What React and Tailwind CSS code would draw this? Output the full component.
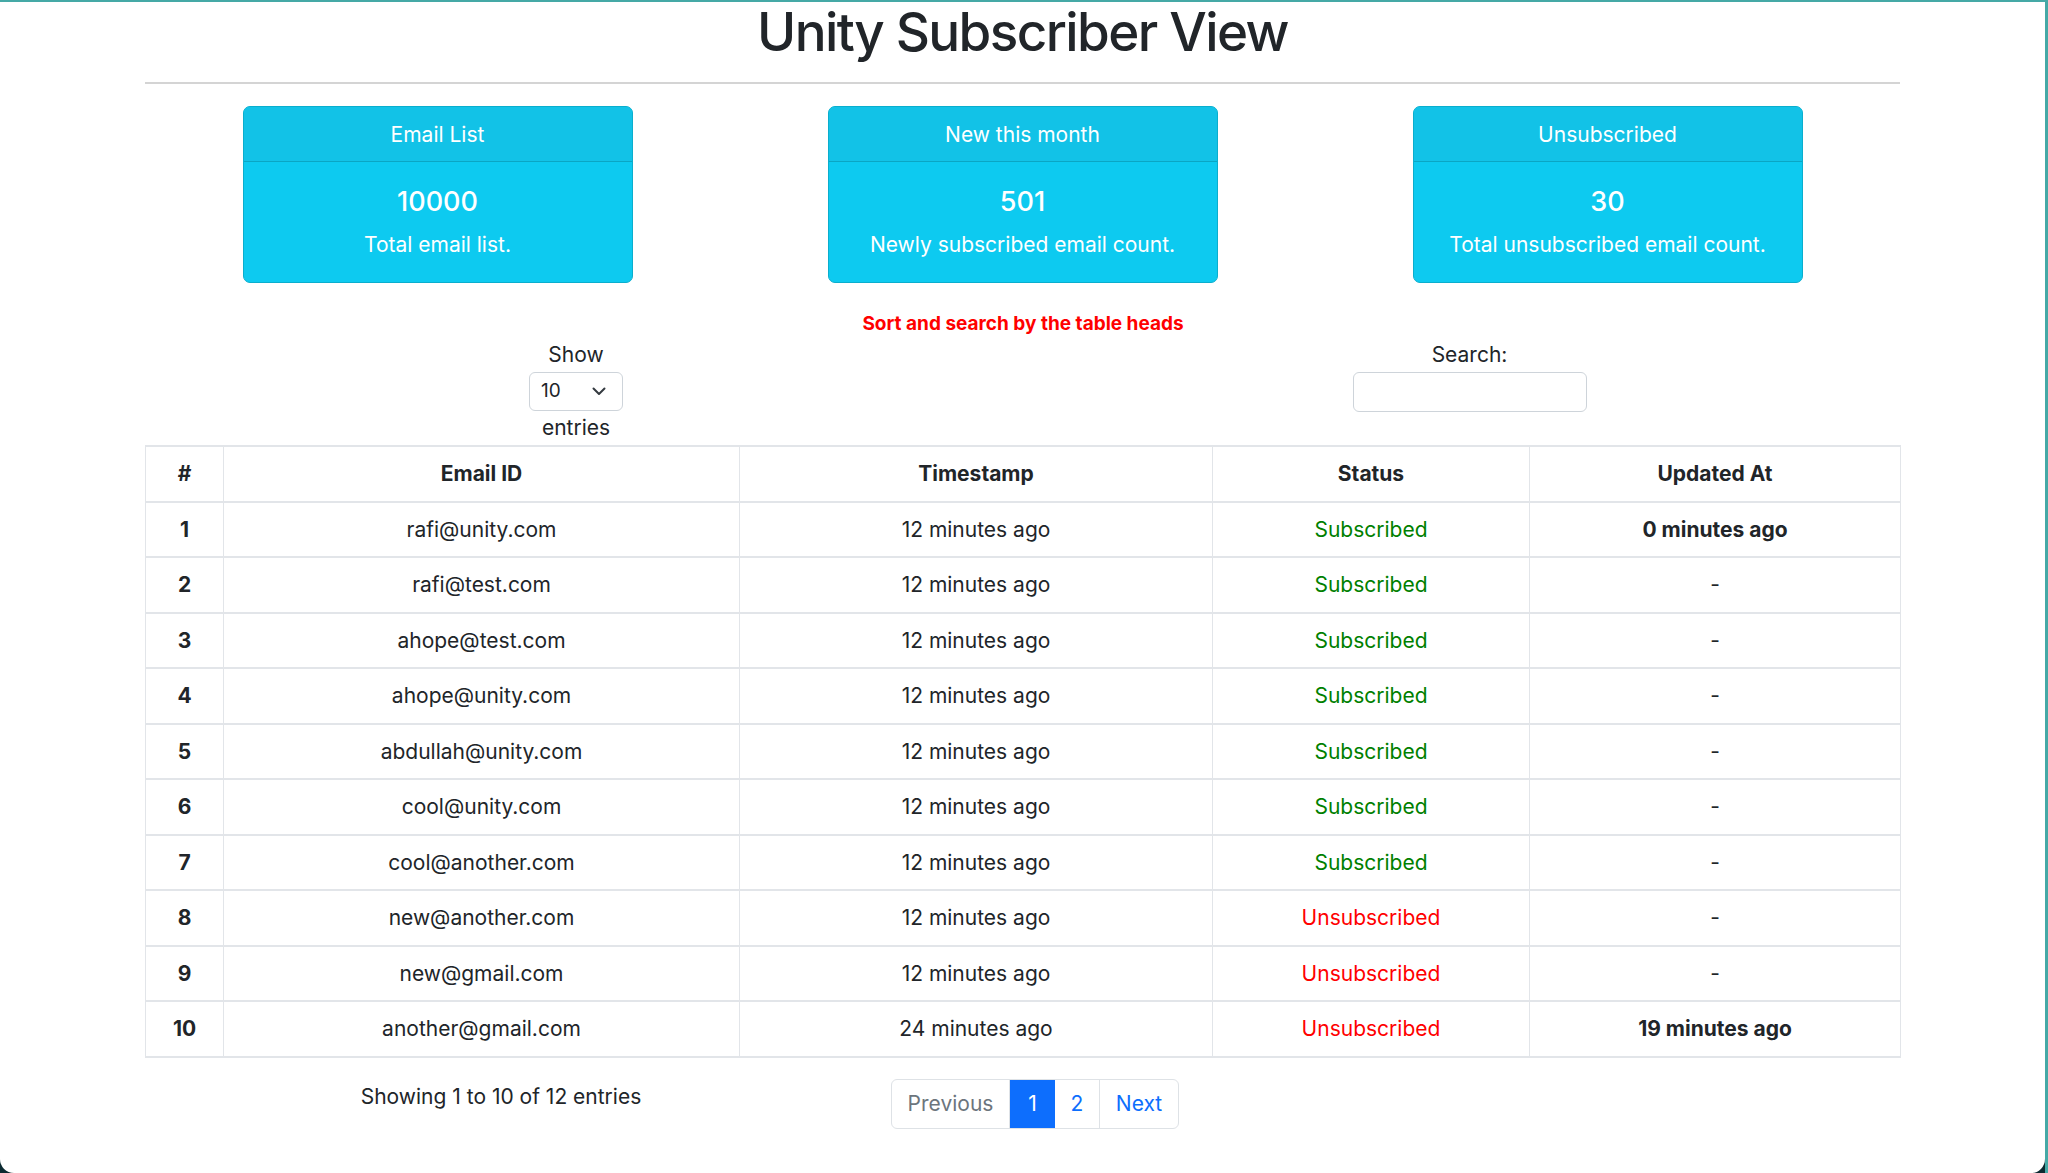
const rows = [
  { id: 1, email: 'rafi@unity.com', ts: '12 minutes ago', sub: true, updated: '0 minutes ago' },
  { id: 2, email: 'rafi@test.com', ts: '12 minutes ago', sub: true, updated: '-' },
  { id: 3, email: 'ahope@test.com', ts: '12 minutes ago', sub: true, updated: '-' },
  { id: 4, email: 'ahope@unity.com', ts: '12 minutes ago', sub: true, updated: '-' },
  { id: 5, email: 'abdullah@unity.com', ts: '12 minutes ago', sub: true, updated: '-' },
  { id: 6, email: 'cool@unity.com', ts: '12 minutes ago', sub: true, updated: '-' },
  { id: 7, email: 'cool@another.com', ts: '12 minutes ago', sub: true, updated: '-' },
  { id: 8, email: 'new@another.com', ts: '12 minutes ago', sub: false, updated: '-' },
  { id: 9, email: 'new@gmail.com', ts: '12 minutes ago', sub: false, updated: '-' },
  { id: 10, email: 'another@gmail.com', ts: '24 minutes ago', sub: false, updated: '19 minutes ago' },
]

const cards = [
  { title: 'Email List', value: '10000', text: 'Total email list.' },
  { title: 'New this month', value: '501', text: 'Newly subscribed email count.' },
  { title: 'Unsubscribed', value: '30', text: 'Total unsubscribed email count.' },
]

function StatCard({ title, value, text }) {
  return (
    <div className="w-[390px] rounded-[7px] border border-[#0aaecd] bg-[#0dcaf0] text-white text-center overflow-hidden">
      <div className="h-[55px] flex items-center justify-center pt-[2px] bg-[#12c2e7] border-b border-[#0aa6c4] text-[21px]">
        {title}
      </div>
      <div className="pt-[23px] pb-[22px]">
        <div className="text-[27px] font-medium leading-[34px]">{value}</div>
        <div className="mt-[11px] text-[21px] leading-[30px]">{text}</div>
      </div>
    </div>
  )
}

const cell = 'h-[55.5px] border-x border-y-2 border-[#e2e5e9] text-center align-middle'

export default function App() {
  return (
    <div className="w-[2048px] h-[1173px] bg-[#0c2a31] border-t-2 border-r-[3px] border-[#45a9a6] overflow-hidden"
      style={{ fontFamily: 'Inter, "Noto Sans", sans-serif' }}>
      <div className="h-full bg-white rounded-b-[14px] text-[#212529] text-[21px]">
        <div className="mx-[145px] w-[1755px]">
          <h1 className="pt-[2px] text-center text-[53px] font-medium leading-[56px] tracking-[-1.6px]">Unity Subscriber View</h1>
          <div className="mt-[22px] h-[2px] bg-[#d4d4d4]" />

          <div className="mt-[22px] grid grid-cols-3">
            {cards.map(c => (
              <div key={c.title} className="flex justify-center">
                <StatCard {...c} />
              </div>
            ))}
          </div>

          <p className="mt-[27px] text-center text-[19px] font-bold text-[#ff0000] leading-[28px] pl-[1px]">
            Sort and search by the table heads
          </p>

          <div className="flex">
            <div className="w-[862px] shrink-0 flex flex-col items-center">
              <span className="leading-[30px] mt-[2px]">Show</span>
              <div className="mt-[2px] w-[94px] h-[39px] border border-[#ced4da] rounded-[6px] flex items-center justify-between pl-[11px] pr-[16px] text-[19px]">
                <span>10</span>
                <svg width="14" height="9" viewBox="0 0 14 9" fill="none" stroke="#343a40" strokeWidth="2" strokeLinecap="round" strokeLinejoin="round">
                  <path d="M1.5 1.5l5.5 5.5 5.5-5.5" />
                </svg>
              </div>
              <span className="leading-[30px] mt-[2px]">entries</span>
            </div>
            <div className="w-[893px] shrink-0 pl-[32px] flex flex-col items-center">
              <span className="leading-[30px] mt-[2px]">Search:</span>
              <input className="mt-[2px] w-[234px] h-[40px] border border-[#ced4da] rounded-[6px] outline-none" />
            </div>
          </div>

          <table className="mt-[2px] w-full border-collapse table-fixed">
            <colgroup>
              <col className="w-[78px]" />
              <col className="w-[516px]" />
              <col className="w-[473px]" />
              <col className="w-[317px]" />
              <col className="w-[371px]" />
            </colgroup>
            <thead>
              <tr className="font-bold">
                <th className={cell}>#</th>
                <th className={cell}>Email ID</th>
                <th className={cell}>Timestamp</th>
                <th className={cell}>Status</th>
                <th className={cell}>Updated At</th>
              </tr>
            </thead>
            <tbody>
              {rows.map(r => (
                <tr key={r.id}>
                  <td className={`${cell} font-bold`}>{r.id}</td>
                  <td className={cell}>{r.email}</td>
                  <td className={cell}>{r.ts}</td>
                  <td className={`${cell} ${r.sub ? 'text-[#008000]' : 'text-[#ff0000]'}`}>
                    {r.sub ? 'Subscribed' : 'Unsubscribed'}
                  </td>
                  <td className={`${cell} ${r.updated !== '-' ? 'font-bold' : ''}`}>{r.updated}</td>
                </tr>
              ))}
            </tbody>
          </table>

          <div className="mt-[24px] flex items-start">
            <div className="w-[712px] text-center leading-[30px]">Showing 1 to 10 of 12 entries</div>
            <div className="ml-[34px] -mt-[3px] flex h-[50px] border border-[#dee2e6] rounded-[6px] overflow-hidden">
              <span className="w-[118px] flex items-center justify-center text-[#6c757d] border-r border-[#dee2e6]">Previous</span>
              <span className="w-[45px] flex items-center justify-center bg-[#0d6efd] text-white">1</span>
              <span className="w-[45px] flex items-center justify-center text-[#0d6efd] border-r border-[#dee2e6]">2</span>
              <span className="w-[78px] flex items-center justify-center text-[#0d6efd]">Next</span>
            </div>
          </div>
        </div>
      </div>
    </div>
  )
}
